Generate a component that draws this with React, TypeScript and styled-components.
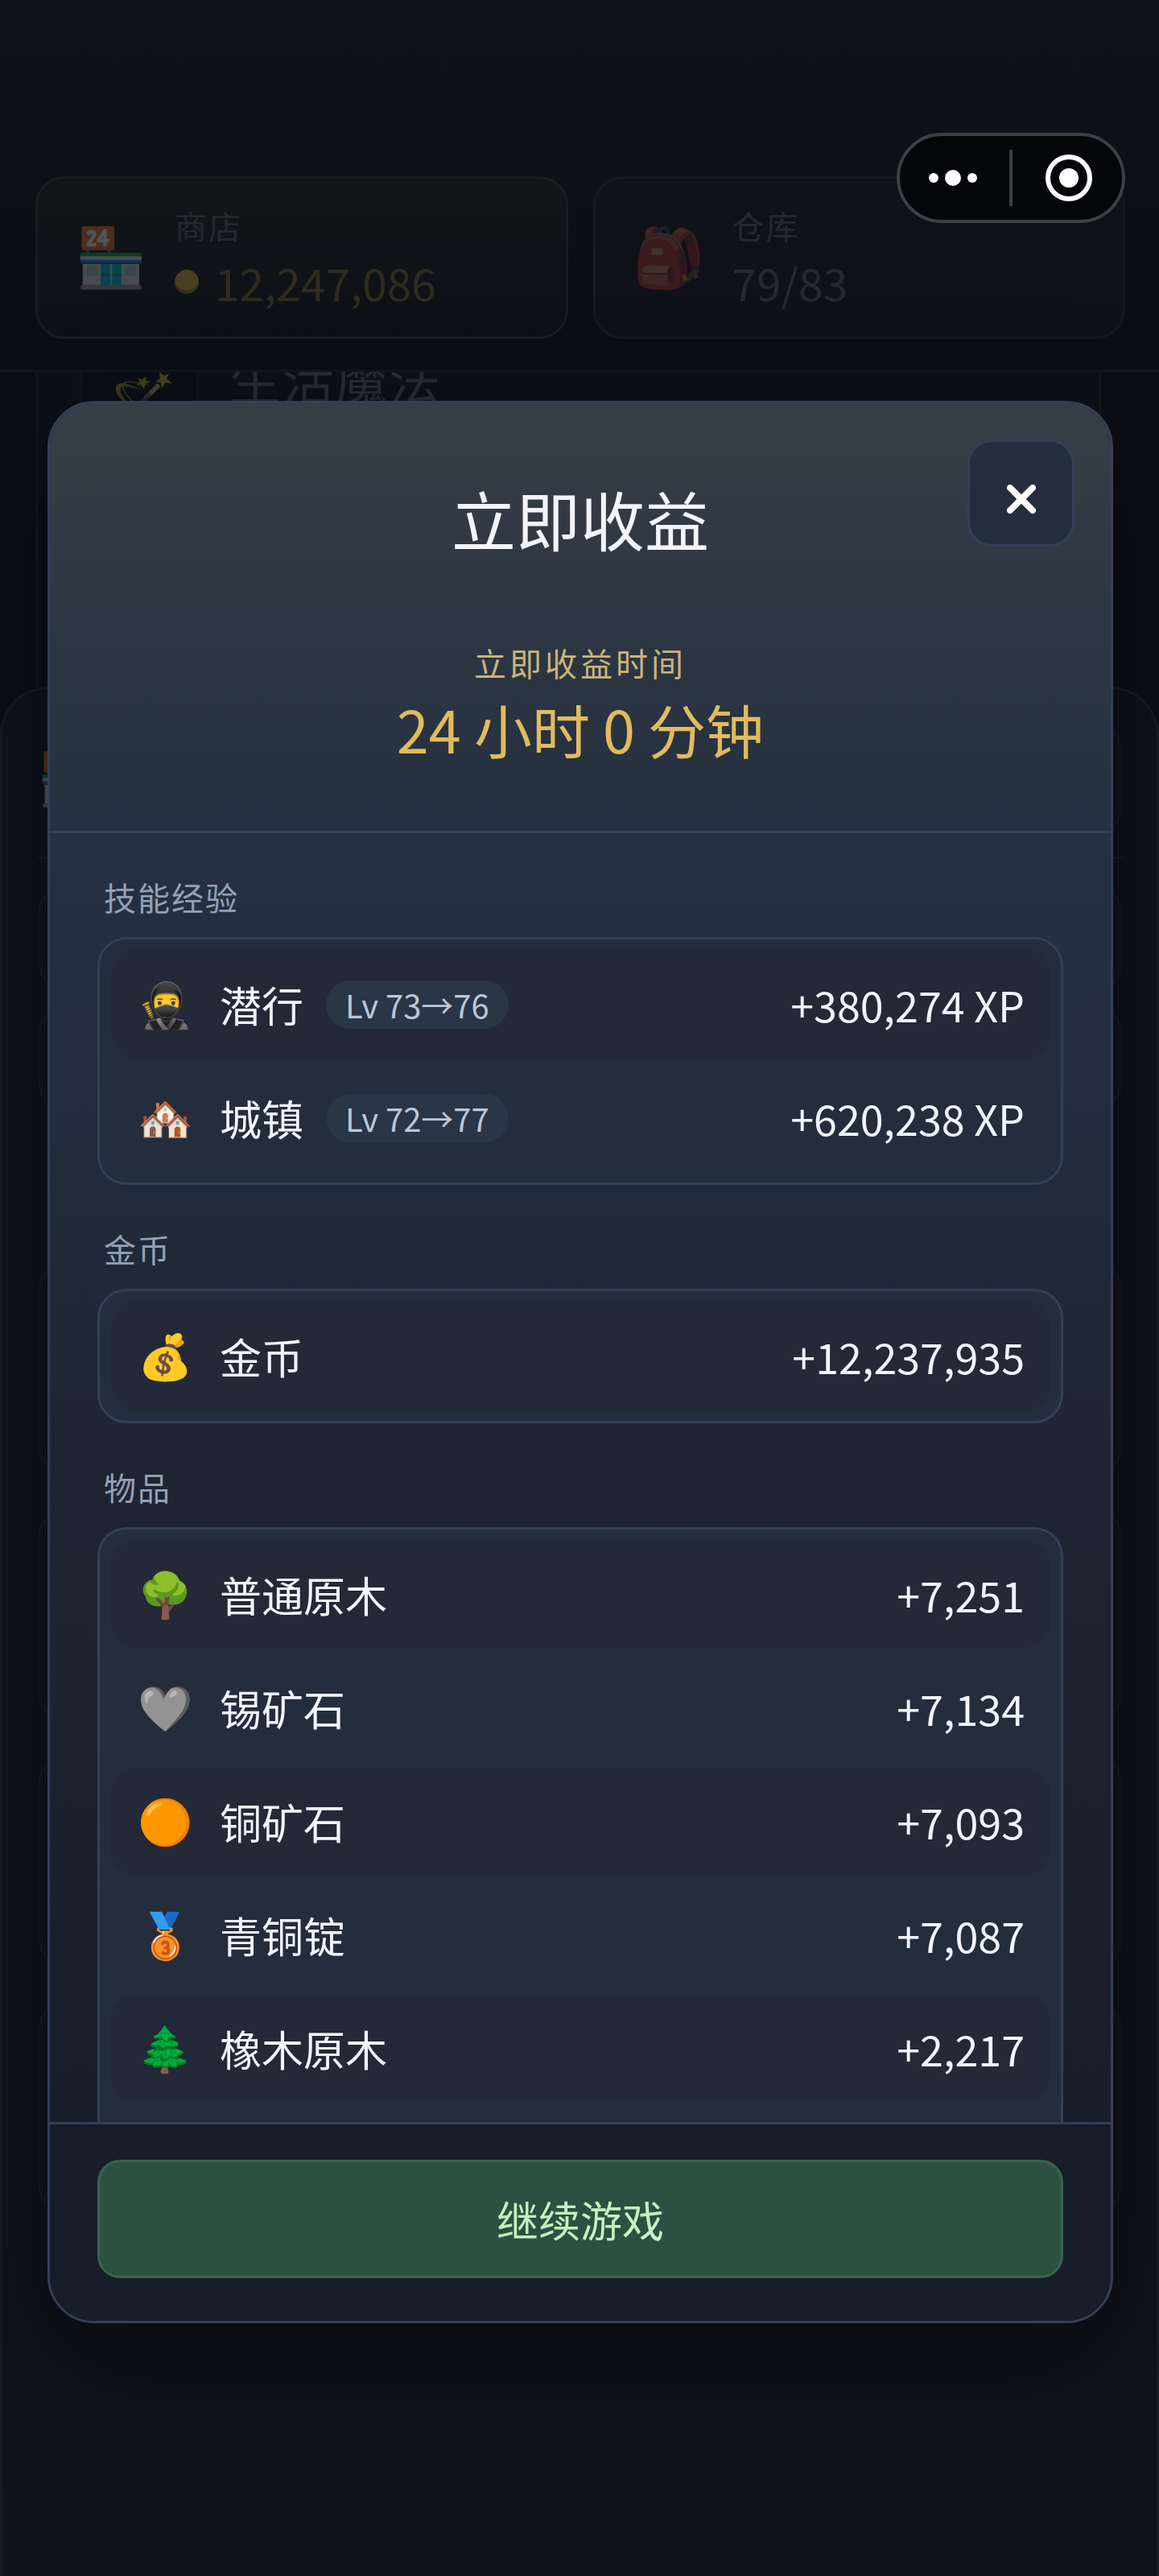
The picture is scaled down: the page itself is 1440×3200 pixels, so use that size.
import styled, { createGlobalStyle } from 'styled-components';

const GlobalStyle = createGlobalStyle`
	* { box-sizing: border-box; }
	body {
		margin: 0;
		background: #0c1017;
		color: #f1f4fb;
		font-family: "Noto Sans CJK SC", sans-serif;
	}
	button { font-family: inherit; cursor: pointer; }
	h1, h2, h3, p, ul { margin: 0; padding: 0; font-weight: 400; }
	ul { list-style: none; }
`;

/* ---------- game screen, dimmed behind the dialog ---------- */

const Screen = styled.div`
	position: relative;
	display: flex;
	flex-direction: column;
	height: 100vh;
	min-height: 1600px;
	overflow: hidden;
	background: #0b0f14;
`;

const TopBar = styled.header`
	display: flex;
	gap: 31px;
	padding: 219px 42px 38px 44px;
	border-bottom: 3px solid #11161b;
	background: linear-gradient(#0d111a, #0b0f13);
`;

const StatCard = styled.section<{ $gold?: boolean }>`
	flex: 1;
	display: flex;
	align-items: center;
	gap: 36px;
	height: 202px;
	padding: 0 46px;
	border: 3px solid ${p => p.$gold ? '#191d1f' : '#131921'};
	border-radius: 36px;
	background: ${p => p.$gold ? 'linear-gradient(#121618, #0d1117)' : '#0e1218'};
`;

const DimEmoji = styled.span<{ $size: number; $width: number; $opacity: number }>`
	flex: none;
	width: ${p => p.$width}px;
	padding-bottom: 12px;
	font-size: ${p => p.$size}px;
	line-height: 84px;
	text-align: center;
	opacity: ${p => p.$opacity};
`;

const StatLabel = styled.h3`
	font-size: 40px;
	line-height: 60px;
	letter-spacing: 2px;
	color: #25292f;
`;

const StatValue = styled.p<{ $gold?: boolean }>`
	display: flex;
	align-items: center;
	gap: 20px;
	font-size: 55px;
	line-height: 80px;
	color: ${p => p.$gold ? '#302b1e' : '#222931'};
`;

const Coin = styled.i`
	width: 30px;
	height: 30px;
	border-radius: 50%;
	background: #4a3f21;
	box-shadow: inset 0 -4px 0 #3a311c;
`;

const Hero = styled.section`
	flex: none;
	height: 391px;
	padding: 0 72px 0 44px;
	overflow: hidden;
`;

const HeroCard = styled.div`
	display: flex;
	gap: 38px;
	height: 480px;
	margin-top: -35px;
	padding-left: 52px;
	border: solid #11161b;
	border-width: 0 3px;
	background: #0c1118;
`;

const HeroIcon = styled.div`
	display: flex;
	align-items: center;
	justify-content: center;
	width: 148px;
	height: 148px;
	border: 3px solid #10151a;
	border-radius: 36px;
	background: #0b0f16;
`;

const HeroTitle = styled.h2`
	font-size: 64px;
	line-height: 84px;
	letter-spacing: 2px;
	color: #292d32;
`;

const Sheet = styled.section`
	flex: 1 0 auto;
	padding: 41px 42px 0 44px;
	border: 3px solid #171d26;
	border-bottom: 0;
	border-radius: 60px 60px 0 0;
	background: #0f141c;
`;

const SheetHead = styled.div`
	display: flex;
	align-items: center;
	justify-content: space-between;
	height: 170px;
	padding-bottom: 26px;
	border-bottom: 3px solid #161c24;
`;

const Slot = styled.div<{ $width?: string; $height: number; $gap: number }>`
	width: ${p => p.$width || '100%'};
	height: ${p => p.$height}px;
	margin-top: ${p => p.$gap}px;
	border: 3px solid #141a23;
	border-radius: 36px;
	background: #10151d;
`;

/* ---------- mini program capsule ---------- */

const Capsule = styled.div`
	position: absolute;
	z-index: 3;
	top: 165px;
	right: 42px;
	display: flex;
	align-items: center;
	width: 284px;
	height: 112px;
	border: 4px solid #3d4042;
	border-radius: 56px;
	background: rgba(3, 6, 8, 0.9);
`;

const CapsuleButton = styled.button`
	flex: 1;
	display: flex;
	justify-content: center;
	padding: 0 4px 0 0;
	border: 0;
	background: none;
	&:last-child { padding: 0 0 0 4px; }
`;

const CapsuleDivider = styled.i`
	width: 4px;
	height: 70px;
	background: #3d4042;
`;

/* ---------- dialog ---------- */

const Overlay = styled.div`
	position: absolute;
	z-index: 2;
	inset: 0;
	display: flex;
	flex-direction: column;
	padding: 498px 57px 314px 59px;
`;

const Dialog = styled.div`
	position: relative;
	flex: 1;
	display: flex;
	flex-direction: column;
	min-height: 0;
	overflow: hidden;
	border: 3px solid #334057;
	border-radius: 58px;
	background: #171e29;
	box-shadow: 0 50px 150px rgba(0, 0, 0, 0.5);
`;

const DialogHead = styled.header`
	padding: 92px 59px 75px;
	border-bottom: 3px solid #334057;
	background: linear-gradient(#363e46, #253040);
	text-align: center;
`;

const Title = styled.h1`
	font-size: 80px;
	line-height: 100px;
`;

const TimeLabel = styled.p`
	margin-top: 100px;
	font-size: 40px;
	line-height: 60px;
	letter-spacing: 4px;
	color: #c9b47d;
`;

const TimeValue = styled.p`
	font-size: 72px;
	line-height: 104px;
	color: #e2bb5e;
`;

const CloseButton = styled.button`
	position: absolute;
	top: 45px;
	right: 45px;
	display: flex;
	align-items: center;
	justify-content: center;
	width: 133px;
	height: 133px;
	padding: 15px 0 0;
	border: 3px solid #334057;
	border-radius: 30px;
	background: #252e3d;
`;

const DialogBody = styled.div`
	flex: 1;
	display: flex;
	flex-direction: column;
	min-height: 0;
	padding: 0 59px;
	overflow: hidden;
	background: linear-gradient(#253042, #212a39 30%, #1f2432 50%, #171e29);
`;

const GroupTitle = styled.h2`
	flex: none;
	margin: 49px 0 20px;
	padding-left: 8px;
	font-size: 40px;
	line-height: 60px;
	letter-spacing: 2px;
	color: #93a1b6;
`;

const Group = styled.ul<{ $open?: boolean }>`
	flex: ${p => p.$open ? '1 0 auto' : 'none'};
	display: flex;
	flex-direction: column;
	gap: 8px;
	padding: 14px;
	border: 3px solid #334057;
	border-bottom-width: ${p => p.$open ? 0 : 3}px;
	border-radius: ${p => p.$open ? '36px 36px 0 0' : '36px'};
	background: #242d3b;
`;

const Row = styled.li`
	display: flex;
	align-items: center;
	height: 133px;
	padding: 0 31px;
	border-radius: 30px;
	font-size: 52px;
	line-height: 76px;
	&:nth-child(odd) { background: #232936; }
`;

const RowIcon = styled.span`
	width: 72px;
	margin-right: 32px;
	padding-bottom: 8px;
	font-size: 55px;
	text-align: center;
`;

const Level = styled.span`
	margin-left: 28px;
	padding: 0 24px;
	border-radius: 30px;
	background: #2a3546;
	font-size: 40px;
	line-height: 60px;
	color: #bac7d8;
`;

const Amount = styled.span`
	margin-left: auto;
`;

const DialogFoot = styled.footer`
	padding: 44px 59px 53px;
	border-top: 3px solid #334057;
	background: #171e29;
`;

const ContinueButton = styled.button`
	width: 100%;
	height: 147px;
	border: 3px solid #396450;
	border-radius: 28px;
	background: #2e5042;
	font-size: 52px;
	color: #c8efc0;
`;

type Gain = { icon: string; name: string; level?: string; amount: string };

const skills: Gain[] = [
	{ icon: '🥷', name: '潜行', level: 'Lv 73→76', amount: '+380,274 XP' },
	{ icon: '🏘️', name: '城镇', level: 'Lv 72→77', amount: '+620,238 XP' },
];

const coins: Gain[] = [{ icon: '💰', name: '金币', amount: '+12,237,935' }];

const items: Gain[] = [
	{ icon: '🌳', name: '普通原木', amount: '+7,251' },
	{ icon: '🩶', name: '锡矿石', amount: '+7,134' },
	{ icon: '🟠', name: '铜矿石', amount: '+7,093' },
	{ icon: '🥉', name: '青铜锭', amount: '+7,087' },
	{ icon: '🌲', name: '橡木原木', amount: '+2,217' },
];

function GainGroup({ title, gains, open }: { title: string; gains: Gain[]; open?: boolean })
{
	return (
		<>
			<GroupTitle>{title}</GroupTitle>
			<Group $open={open}>
				{gains.map(gain => (
					<Row key={gain.name}>
						<RowIcon>{gain.icon}</RowIcon>
						<span>{gain.name}</span>
						{gain.level && <Level>{gain.level}</Level>}
						<Amount>{gain.amount}</Amount>
					</Row>
				))}
			</Group>
		</>
	);
}

function App()
{
	return (
		<Screen>
			<GlobalStyle />
			<TopBar>
				<StatCard $gold>
					<DimEmoji $size={72} $width={88} $opacity={0.27}>🏪</DimEmoji>
					<div>
						<StatLabel>商店</StatLabel>
						<StatValue $gold><Coin />12,247,086</StatValue>
					</div>
				</StatCard>
				<StatCard>
					<DimEmoji $size={72} $width={88} $opacity={0.2}>🎒</DimEmoji>
					<div>
						<StatLabel>仓库</StatLabel>
						<StatValue>79/83</StatValue>
					</div>
				</StatCard>
			</TopBar>
			<Hero>
				<HeroCard>
					<HeroIcon><DimEmoji $size={72} $width={88} $opacity={0.25}>🪄</DimEmoji></HeroIcon>
					<HeroTitle>生活魔法</HeroTitle>
				</HeroCard>
			</Hero>
			<Sheet>
				<SheetHead>
					<DimEmoji $size={64} $width={76} $opacity={0.35}>🏪</DimEmoji>
					<Slot $width="141px" $height={141} $gap={0} />
				</SheetHead>
				<Slot $height={133} $gap={32} />
				<Slot $height={130} $gap={17} />
				<Slot $height={264} $gap={189} />
				<Slot $height={264} $gap={42} />
				<Slot $height={264} $gap={42} />
				<Slot $height={264} $gap={42} />
			</Sheet>
			<Overlay>
				<Dialog role="dialog" aria-labelledby="gain-title">
					<DialogHead>
						<Title id="gain-title">立即收益</Title>
						<TimeLabel>立即收益时间</TimeLabel>
						<TimeValue>24 小时 0 分钟</TimeValue>
					</DialogHead>
					<CloseButton aria-label="关闭">
						<svg width="36" height="36" viewBox="0 0 36 36" stroke="#fff" strokeWidth="8" strokeLinecap="round">
							<path d="M4 4 32 32M32 4 4 32" />
						</svg>
					</CloseButton>
					<DialogBody>
						<GainGroup title="技能经验" gains={skills} />
						<GainGroup title="金币" gains={coins} />
						<GainGroup title="物品" gains={items} open />
					</DialogBody>
					<DialogFoot>
						<ContinueButton>继续游戏</ContinueButton>
					</DialogFoot>
				</Dialog>
			</Overlay>
			<Capsule>
				<CapsuleButton aria-label="更多">
					<svg width="60" height="60" viewBox="0 0 60 60" fill="#fff">
						<circle cx="6" cy="30" r="6" />
						<circle cx="30" cy="30" r="10" />
						<circle cx="54" cy="30" r="6" />
					</svg>
				</CapsuleButton>
				<CapsuleDivider />
				<CapsuleButton aria-label="退出">
					<svg width="60" height="60" viewBox="0 0 60 60" fill="none">
						<circle cx="30" cy="30" r="26" stroke="#fff" strokeWidth="6" />
						<circle cx="30" cy="30" r="12" fill="#fff" />
					</svg>
				</CapsuleButton>
			</Capsule>
		</Screen>
	);
}

export default App;
